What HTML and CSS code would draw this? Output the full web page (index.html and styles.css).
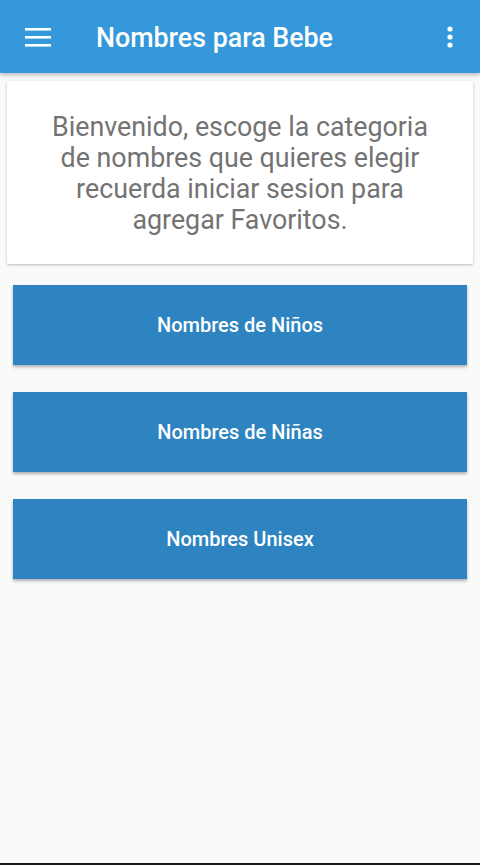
FILE: index.html
```html
<!doctype html>
<html lang="es">
<head>
    <meta charset="UTF-8">
    <meta name="viewport" content="width=device-width, initial-scale=1.0">
    <title>Nombres para Bebe</title>
    <link rel="stylesheet" href="styles.css">
</head>
<body>
<div class="app">
    <header class="toolbar">
        <button class="icon-btn menu">
            <svg width="26" height="20" viewBox="0 0 26 20">
                <rect x="0" y="1" width="26" height="2.6" fill="#fff"/>
                <rect x="0" y="9" width="26" height="2.6" fill="#fff"/>
                <rect x="0" y="17" width="26" height="2.6" fill="#fff"/>
            </svg>
        </button>
        <h1 class="title">Nombres para Bebe</h1>
        <button class="icon-btn more">
            <svg width="6" height="22" viewBox="0 0 6 22">
                <circle cx="3" cy="3" r="2.6" fill="#fff"/>
                <circle cx="3" cy="11" r="2.6" fill="#fff"/>
                <circle cx="3" cy="19" r="2.6" fill="#fff"/>
            </svg>
        </button>
    </header>
    <main class="content">
        <div class="welcome">
            <p>Bienvenido, escoge la categoria de nombres que quieres elegir recuerda iniciar sesion para agregar Favoritos.</p>
        </div>
        <div class="categories">
            <a class="category" href="#ninos">Nombres de Niños</a>
            <a class="category" href="#ninas">Nombres de Niñas</a>
            <a class="category" href="#unisex">Nombres Unisex</a>
        </div>
    </main>
    <div class="navbar"></div>
</div>
</body>
</html>
```

FILE: styles.css
```css
html, body {
    margin: 0;
    height: 100%;
}
body {
    font-family: Roboto, 'Noto Sans', sans-serif;
    background-color: #fafafa;
}
.app {
    display: flex;
    flex-direction: column;
    height: 865px;
}
.toolbar {
    height: 73px;
    flex-shrink: 0;
    background-color: #3498db;
    display: flex;
    align-items: center;
    box-shadow: 0 2px 4px rgba(0, 0, 0, 0.25);
    position: relative;
    z-index: 1;
}
.icon-btn {
    background: none;
    border: none;
    padding: 0;
    display: flex;
    align-items: center;
    justify-content: center;
}
.menu {
    margin-left: 25px;
    width: 26px;
    margin-top: 1px;
}
.title {
    margin: 3px 0 0 45px;
    flex: 1;
    color: #fff;
    font-size: 26.8px;
    font-weight: 500;
}
.more {
    margin-right: 27px;
    margin-top: 1px;
}
.content {
    flex: 1;
    padding: 8px 7px 0;
}
.welcome {
    background-color: #fff;
    border-radius: 2px;
    box-shadow: 0 1px 3px rgba(0, 0, 0, 0.25);
    height: 183px;
    display: flex;
    align-items: center;
    justify-content: center;
}
.welcome p {
    margin: 0;
    padding: 2px 38px 0;
    text-align: center;
    color: #737373;
    font-size: 26.8px;
    line-height: 31px;
}
.categories {
    display: flex;
    flex-direction: column;
    gap: 27px;
    padding: 21px 6px 0;
}
.category {
    height: 80px;
    display: flex;
    align-items: center;
    justify-content: center;
    background-color: #2d84c0;
    color: #fff;
    text-decoration: none;
    font-size: 20px;
    font-weight: 500;
    box-shadow: 0 2px 3px rgba(0, 0, 0, 0.3);
}
.navbar {
    height: 2px;
    flex-shrink: 0;
    background-color: #1a1a1a;
}
```
